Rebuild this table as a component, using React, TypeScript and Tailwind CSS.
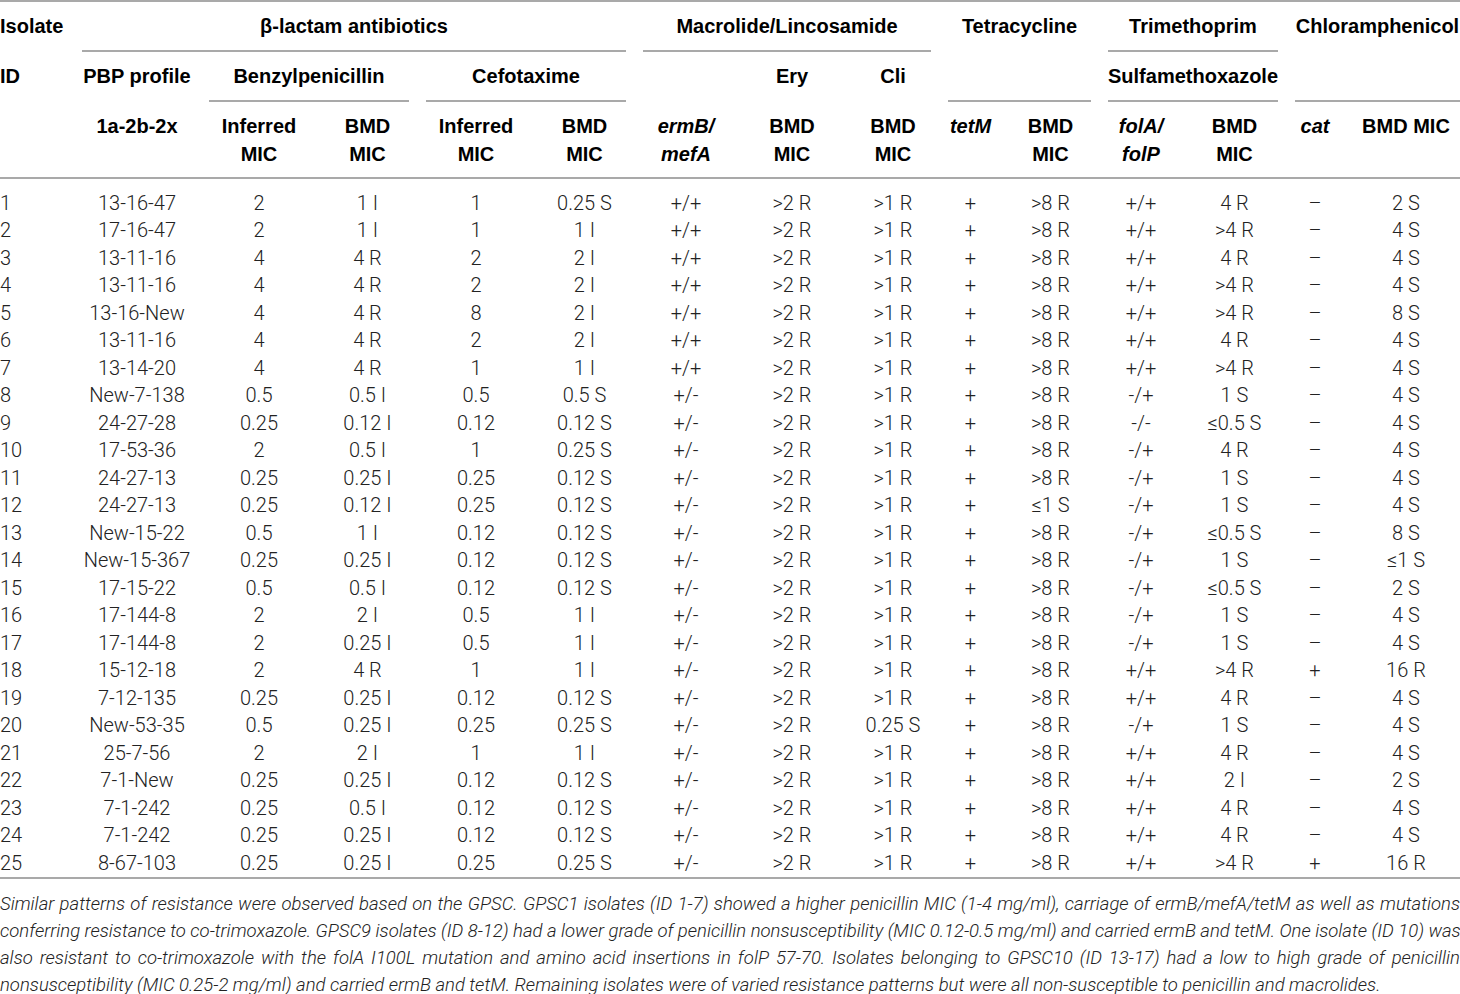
const cols =
  "grid-cols-[65px_110px_100px_83px_100px_83px_86px_92px_76px_45px_81px_66px_87px_40px_108px]"

const rows = [
  "1|13-16-47|2|1 I|1|0.25 S|+/+|>2 R|>1 R|+|>8 R|+/+|4 R|–|2 S",
  "2|17-16-47|2|1 I|1|1 I|+/+|>2 R|>1 R|+|>8 R|+/+|>4 R|–|4 S",
  "3|13-11-16|4|4 R|2|2 I|+/+|>2 R|>1 R|+|>8 R|+/+|4 R|–|4 S",
  "4|13-11-16|4|4 R|2|2 I|+/+|>2 R|>1 R|+|>8 R|+/+|>4 R|–|4 S",
  "5|13-16-New|4|4 R|8|2 I|+/+|>2 R|>1 R|+|>8 R|+/+|>4 R|–|8 S",
  "6|13-11-16|4|4 R|2|2 I|+/+|>2 R|>1 R|+|>8 R|+/+|4 R|–|4 S",
  "7|13-14-20|4|4 R|1|1 I|+/+|>2 R|>1 R|+|>8 R|+/+|>4 R|–|4 S",
  "8|New-7-138|0.5|0.5 I|0.5|0.5 S|+/-|>2 R|>1 R|+|>8 R|-/+|1 S|–|4 S",
  "9|24-27-28|0.25|0.12 I|0.12|0.12 S|+/-|>2 R|>1 R|+|>8 R|-/-|≤0.5 S|–|4 S",
  "10|17-53-36|2|0.5 I|1|0.25 S|+/-|>2 R|>1 R|+|>8 R|-/+|4 R|–|4 S",
  "11|24-27-13|0.25|0.25 I|0.25|0.12 S|+/-|>2 R|>1 R|+|>8 R|-/+|1 S|–|4 S",
  "12|24-27-13|0.25|0.12 I|0.25|0.12 S|+/-|>2 R|>1 R|+|≤1 S|-/+|1 S|–|4 S",
  "13|New-15-22|0.5|1 I|0.12|0.12 S|+/-|>2 R|>1 R|+|>8 R|-/+|≤0.5 S|–|8 S",
  "14|New-15-367|0.25|0.25 I|0.12|0.12 S|+/-|>2 R|>1 R|+|>8 R|-/+|1 S|–|≤1 S",
  "15|17-15-22|0.5|0.5 I|0.12|0.12 S|+/-|>2 R|>1 R|+|>8 R|-/+|≤0.5 S|–|2 S",
  "16|17-144-8|2|2 I|0.5|1 I|+/-|>2 R|>1 R|+|>8 R|-/+|1 S|–|4 S",
  "17|17-144-8|2|0.25 I|0.5|1 I|+/-|>2 R|>1 R|+|>8 R|-/+|1 S|–|4 S",
  "18|15-12-18|2|4 R|1|1 I|+/-|>2 R|>1 R|+|>8 R|+/+|>4 R|+|16 R",
  "19|7-12-135|0.25|0.25 I|0.12|0.12 S|+/-|>2 R|>1 R|+|>8 R|+/+|4 R|–|4 S",
  "20|New-53-35|0.5|0.25 I|0.25|0.25 S|+/-|>2 R|0.25 S|+|>8 R|-/+|1 S|–|4 S",
  "21|25-7-56|2|2 I|1|1 I|+/-|>2 R|>1 R|+|>8 R|+/+|4 R|–|4 S",
  "22|7-1-New|0.25|0.25 I|0.12|0.12 S|+/-|>2 R|>1 R|+|>8 R|+/+|2 I|–|2 S",
  "23|7-1-242|0.25|0.5 I|0.12|0.12 S|+/-|>2 R|>1 R|+|>8 R|+/+|4 R|–|4 S",
  "24|7-1-242|0.25|0.25 I|0.12|0.12 S|+/-|>2 R|>1 R|+|>8 R|+/+|4 R|–|4 S",
  "25|8-67-103|0.25|0.25 I|0.25|0.25 S|+/-|>2 R|>1 R|+|>8 R|+/+|>4 R|+|16 R",
].map((r) => r.split("|"))

const notes = [
  "Similar patterns of resistance were observed based on the GPSC. GPSC1 isolates (ID 1-7) showed a higher penicillin MIC (1-4 mg/ml), carriage of ermB/mefA/tetM as well as mutations",
  "conferring resistance to co-trimoxazole. GPSC9 isolates (ID 8-12) had a lower grade of penicillin nonsusceptibility (MIC 0.12-0.5 mg/ml) and carried ermB and tetM. One isolate (ID 10) was",
  "also resistant to co-trimoxazole with the folA I100L mutation and amino acid insertions in folP 57-70. Isolates belonging to GPSC10 (ID 13-17) had a low to high grade of penicillin",
]

const line = "border-b-2 border-[#a9a9a9]"
const noLine = "border-b-2 border-transparent"

export default function App() {
  return (
    <div
      className="w-[1460px] overflow-hidden bg-white text-[#1a1a1a]"
      style={{ fontFamily: '"Liberation Sans", Arial, sans-serif' }}
    >
      {/* header */}
      <div
        className={`grid ${cols} grid-rows-[50px_50px_75px] gap-x-[17px] border-t-2 border-[#a9a9a9] text-[20px] font-bold text-black`}
      >
        <div className={`col-start-1 row-start-1 flex items-center ${noLine}`}>Isolate</div>
        <div className={`col-start-2 col-span-5 row-start-1 flex items-center justify-center ${line}`}>
          β-lactam antibiotics
        </div>
        <div className={`col-start-7 col-span-3 row-start-1 flex items-center justify-center ${line}`}>
          Macrolide/Lincosamide
        </div>
        <div className={`col-start-10 col-span-2 row-start-1 flex items-center justify-center ${noLine}`}>
          Tetracycline
        </div>
        <div className={`col-start-12 col-span-2 row-start-1 flex items-center justify-center ${line}`}>
          Trimethoprim
        </div>
        <div className={`col-start-14 col-span-2 row-start-1 flex items-center justify-center whitespace-nowrap ${noLine}`}>
          Chloramphenicol
        </div>

        <div className={`col-start-1 row-start-2 flex items-center ${noLine}`}>ID</div>
        <div className={`col-start-2 row-start-2 flex items-center justify-center whitespace-nowrap ${noLine}`}>
          PBP profile
        </div>
        <div className={`col-start-3 col-span-2 row-start-2 flex items-center justify-center ${line}`}>
          Benzylpenicillin
        </div>
        <div className={`col-start-5 col-span-2 row-start-2 flex items-center justify-center ${line}`}>
          Cefotaxime
        </div>
        <div className={`col-start-8 row-start-2 flex items-center justify-center ${noLine}`}>Ery</div>
        <div className={`col-start-9 row-start-2 flex items-center justify-center ${noLine}`}>Cli</div>
        <div className={`col-start-10 col-span-2 row-start-2 ${line}`} />
        <div className={`col-start-12 col-span-2 row-start-2 flex items-center justify-center ${line}`}>
          Sulfamethoxazole
        </div>
        <div className={`col-start-14 col-span-2 row-start-2 ${line}`} />

        <div className="col-start-2 row-start-3 pt-[10px] text-center leading-[28px]">1a-2b-2x</div>
        <div className="col-start-3 row-start-3 pt-[10px] text-center leading-[28px]">Inferred<br />MIC</div>
        <div className="col-start-4 row-start-3 pt-[10px] text-center leading-[28px]">BMD<br />MIC</div>
        <div className="col-start-5 row-start-3 pt-[10px] text-center leading-[28px]">Inferred<br />MIC</div>
        <div className="col-start-6 row-start-3 pt-[10px] text-center leading-[28px]">BMD<br />MIC</div>
        <div className="col-start-7 row-start-3 pt-[10px] text-center italic leading-[28px]">ermB/<br />mefA</div>
        <div className="col-start-8 row-start-3 pt-[10px] text-center leading-[28px]">BMD<br />MIC</div>
        <div className="col-start-9 row-start-3 pt-[10px] text-center leading-[28px]">BMD<br />MIC</div>
        <div className="col-start-10 row-start-3 pt-[10px] text-center italic leading-[28px]">tetM</div>
        <div className="col-start-11 row-start-3 pt-[10px] text-center leading-[28px]">BMD<br />MIC</div>
        <div className="col-start-12 row-start-3 pt-[10px] text-center italic leading-[28px]">folA/<br />folP</div>
        <div className="col-start-13 row-start-3 pt-[10px] text-center leading-[28px]">BMD<br />MIC</div>
        <div className="col-start-14 row-start-3 pt-[10px] text-center italic leading-[28px]">cat</div>
        <div className="col-start-15 row-start-3 pt-[10px] text-center leading-[28px] whitespace-nowrap">BMD MIC</div>
      </div>

      <div className="h-[2px] bg-[#a9a9a9]" />

      {/* body */}
      <div
        className={`grid ${cols} gap-x-[17px] pt-[10.5px] text-[20px] font-light text-[#222]`}
        style={{ fontFamily: 'Roboto, "Liberation Sans", sans-serif' }}
      >
        {rows.map((r) =>
          r.map((v, i) => (
            <div
              key={r[0] + "-" + i}
              className={`h-[27.5px] leading-[27.5px] whitespace-nowrap ${i === 0 ? "text-left" : "text-center"}`}
            >
              {v}
            </div>
          ))
        )}
      </div>

      <div className="h-[2px] bg-[#a9a9a9]" />

      {/* footnote */}
      <div
        className="pt-[12px] text-[18.5px] font-light italic leading-[27px] text-[#222]"
        style={{ fontFamily: 'Roboto, "Liberation Sans", sans-serif' }}
      >
        {notes.map((n) => (
          <div key={n} className="whitespace-nowrap text-justify [text-align-last:justify]">
            {n}
          </div>
        ))}
        <div className="whitespace-nowrap">
          nonsusceptibility (MIC 0.25-2 mg/ml) and carried ermB and tetM. Remaining isolates were of varied resistance
          patterns but were all non-susceptible to penicillin and macrolides.
        </div>
      </div>
    </div>
  )
}
